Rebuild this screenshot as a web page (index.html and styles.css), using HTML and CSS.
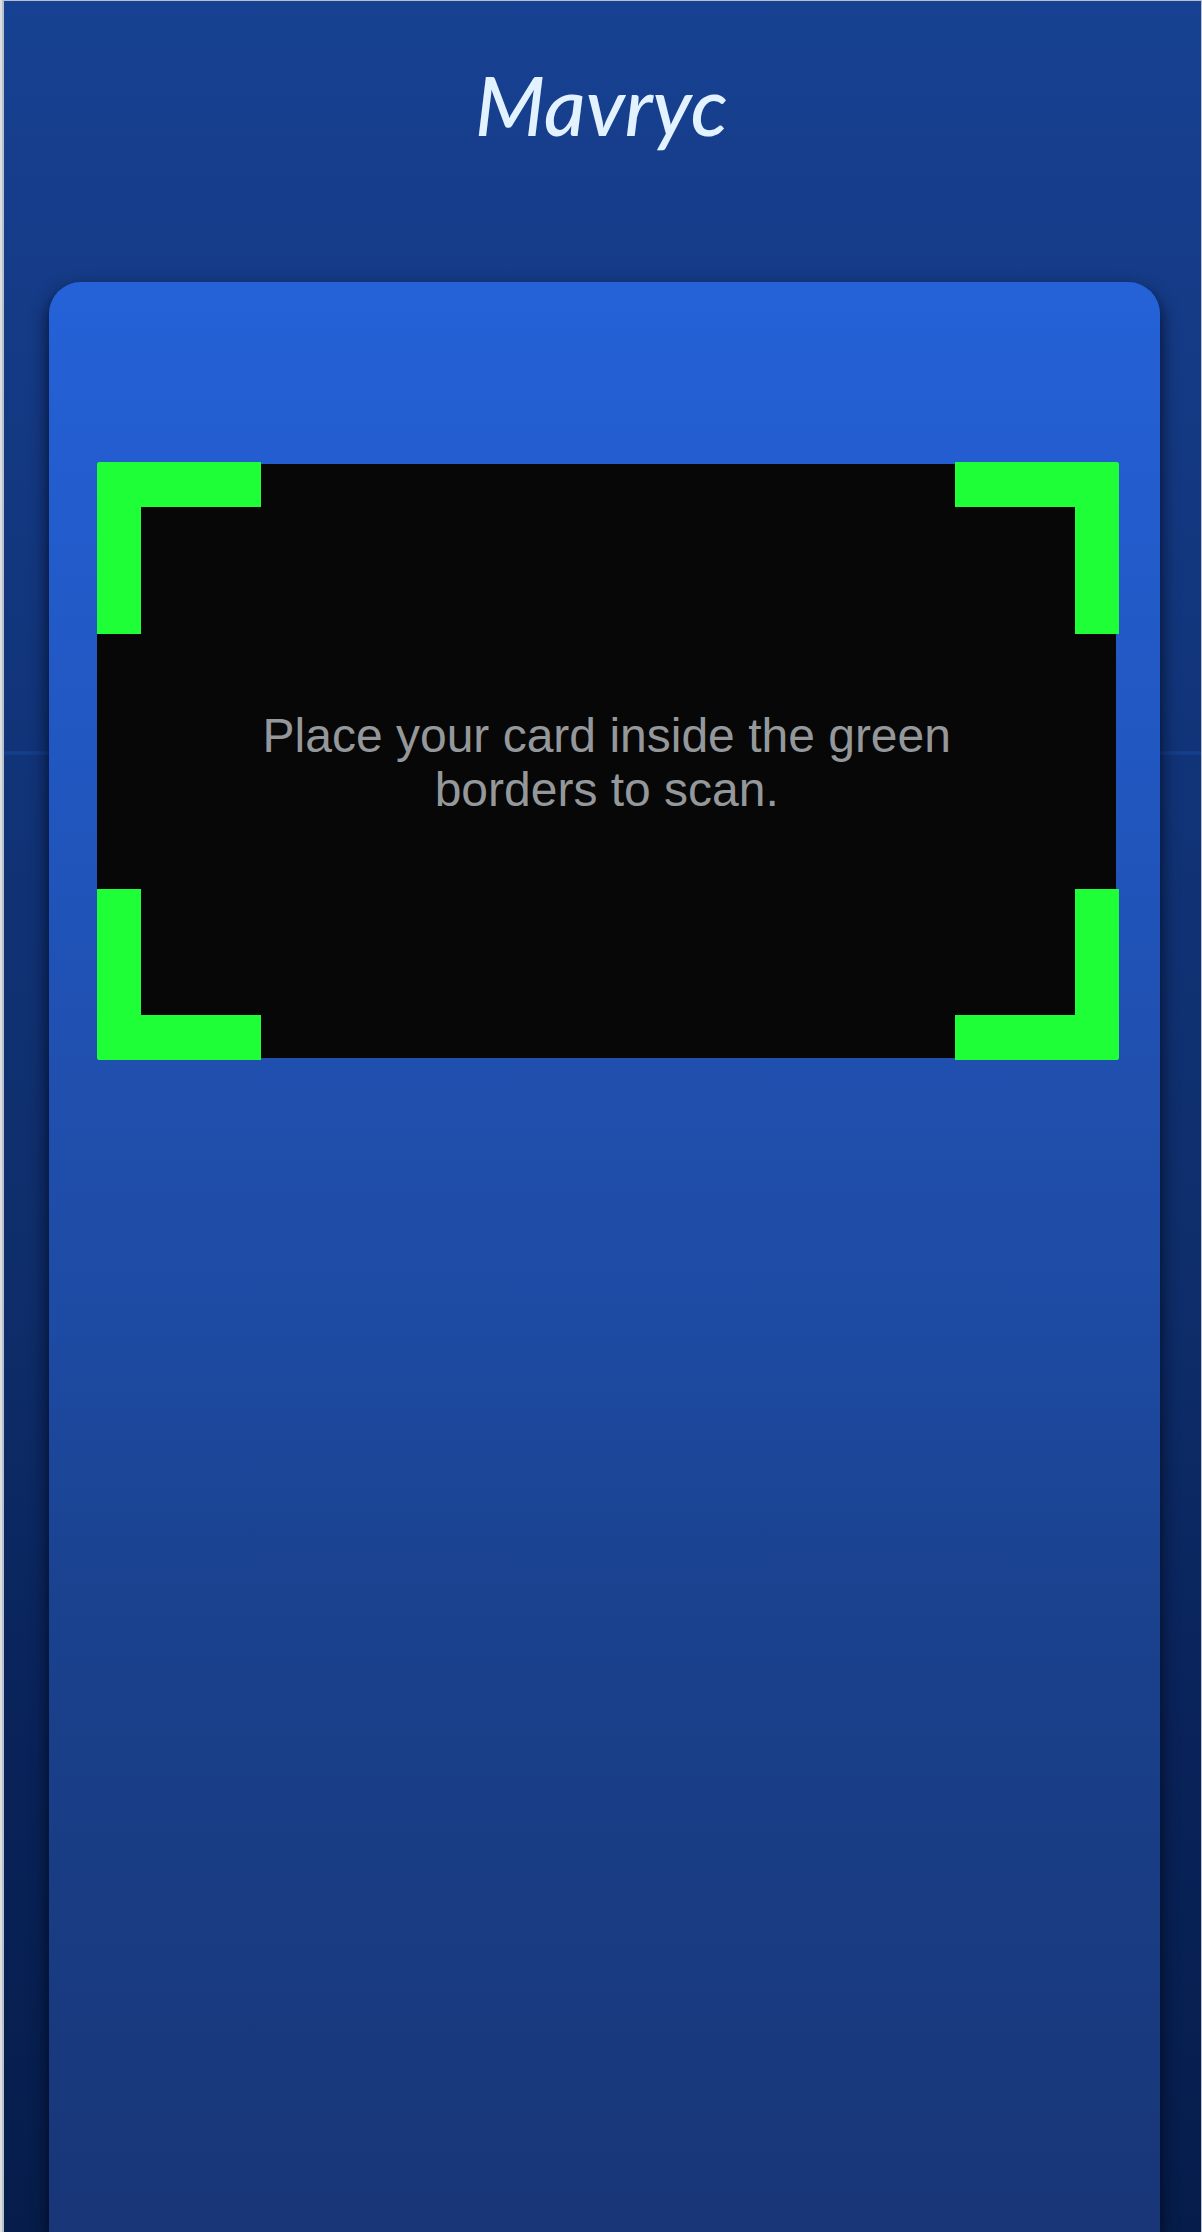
FILE: index.html
```html
<!DOCTYPE html>
<html lang="en">
<head>
<meta charset="utf-8">
<title>Mavryc</title>
<link rel="stylesheet" href="styles.css">
</head>
<body>
<div class="screen">
  <header class="header"><h1 class="logo">Mavryc</h1></header>
  <main class="card">
    <section class="scanner">
      <p class="hint">Place your card inside the green<br>borders to scan.</p>
      <span class="corner top left"></span>
      <span class="corner top right"></span>
      <span class="corner bottom left"></span>
      <span class="corner bottom right"></span>
    </section>
  </main>
  <div class="divider"></div>
</div>
</body>
</html>
```
FILE: styles.css
```css
* { box-sizing: border-box; }

body {
  margin: 0;
  height: 2232px;
  padding: 1px 1px 0 2px;
  background: linear-gradient(90deg, #dcdfe0 0, #dcdfe0 2px, #b9bfcb 2px);
  font-family: "Liberation Sans", Arial, sans-serif;
  overflow: hidden;
}

.screen {
  position: relative;
  display: flex;
  flex-direction: column;
  height: 2231px;
  margin-left: 2px;
  padding: 0 41px 0 44.5px;
  overflow: hidden;
  background: linear-gradient(180deg, #174192 0%, #153b87 14%, #113479 33%, #0e2d6a 58%, #09235a 78%, #061d4b 100%);
}

.header {
  display: flex;
  justify-content: center;
  flex: 0 0 281px;
  padding: 59px 6px 0 0;
}

.logo {
  margin: 0;
  font: italic 500 81px/90px Lato, sans-serif;
  color: #e2f2ff;
}

.card {
  position: relative;
  z-index: 1;
  flex: 1;
  padding: 182px 44.5px 0 48.5px;
  border-radius: 32px 32px 0 0;
  background: linear-gradient(180deg, #2562d8 0%, #235dcf 9%, #2054ba 31%, #204fae 41%, #1d4aa2 54%, #1a428f 67%, #193c83 83%, #183678 100%);
  box-shadow: 0 8px 18px 0 rgba(0, 5, 20, .85);
}

.scanner {
  position: relative;
  display: flex;
  align-items: center;
  justify-content: center;
  height: 594px;
  background: #070707;
}

.hint {
  margin: 0;
  padding: 3px 0 0 1px;
  font-size: 48px;
  line-height: 54px;
  text-align: center;
  white-space: nowrap;
  color: #95989b;
}

.corner {
  position: absolute;
  width: 164px;
  height: 171.5px;
  border: 0 solid #1fff37;
}

.top { top: -2px; border-top-width: 45px; }
.bottom { bottom: -2px; border-bottom-width: 45px; }
.left { left: 0; border-left-width: 44px; }
.right { right: -3px; border-right-width: 44px; }
.top.left { border-radius: 3px 0 0; }
.top.right { border-radius: 0 3px 0 0; }
.bottom.left { border-radius: 0 0 0 3px; }
.bottom.right { border-radius: 0 0 3px; }

.divider {
  position: absolute;
  top: 750px;
  left: 0;
  right: 0;
  height: 4px;
  background: linear-gradient(180deg, #123a84, #153f8e 50%, #123a84);
}
```
